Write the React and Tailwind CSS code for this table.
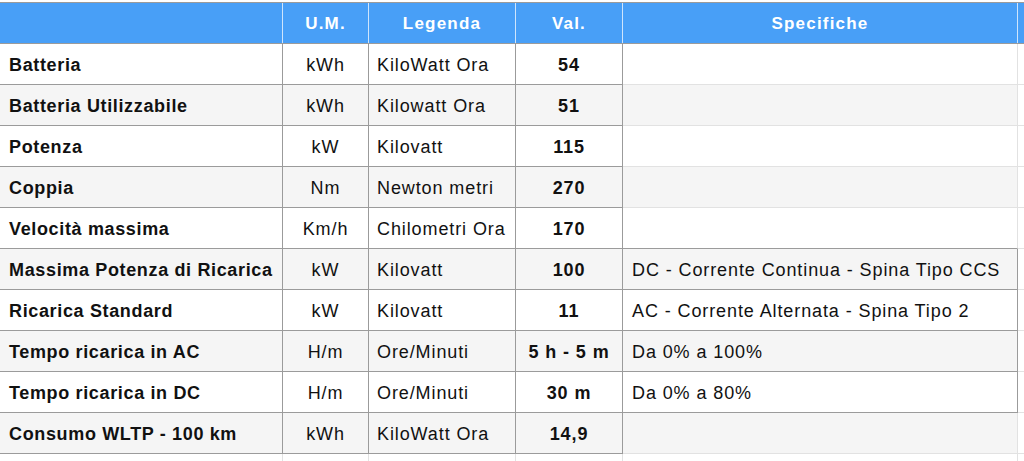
import React from "react";

const rows = [
    { name: "Batteria", um: "kWh", leg: "KiloWatt Ora", val: "54", spec: "" },
    { name: "Batteria Utilizzabile", um: "kWh", leg: "Kilowatt Ora", val: "51", spec: "" },
    { name: "Potenza", um: "kW", leg: "Kilovatt", val: "115", spec: "" },
    { name: "Coppia", um: "Nm", leg: "Newton metri", val: "270", spec: "" },
    { name: "Velocità massima", um: "Km/h", leg: "Chilometri Ora", val: "170", spec: "" },
    { name: "Massima Potenza di Ricarica", um: "kW", leg: "Kilovatt", val: "100", spec: "DC - Corrente Continua - Spina Tipo CCS" },
    { name: "Ricarica Standard", um: "kW", leg: "Kilovatt", val: "11", spec: "AC - Corrente Alternata - Spina Tipo 2" },
    { name: "Tempo ricarica in AC", um: "H/m", leg: "Ore/Minuti", val: "5 h - 5 m", spec: "Da 0% a 100%" },
    { name: "Tempo ricarica in DC", um: "H/m", leg: "Ore/Minuti", val: "30 m", spec: "Da 0% a 80%" },
    { name: "Consumo WLTP - 100 km", um: "kWh", leg: "KiloWatt Ora", val: "14,9", spec: "" },
];

const font = { fontFamily: "'Liberation Sans', Arial, sans-serif" };

const SpecCell = ({ row, next, children }) => {
    const boxed = row.spec !== "";
    const bottomDark = boxed || (next && next.spec !== "");
    return (
        <div
            className={
                "w-[395px] h-full flex items-center pl-[9px] pt-[3px] border-r border-b " +
                (boxed ? "border-r-[#9b9b9b] " : "border-r-[#e2e2e2] ") +
                (bottomDark ? "border-b-[#9b9b9b]" : "border-b-[#e2e2e2]")
            }
        >
            {children}
        </div>
    );
};

export default function App() {
    return (
        <div className="w-[1024px] h-[461px] overflow-hidden bg-white pt-[2px] text-[18px] tracking-[0.9px] text-[#111]" style={font}>
            <div className="flex h-[42px] bg-[#489ff7] border-t border-b border-[#9b9b9b] text-white font-bold text-[17px] tracking-[1.2px]">
                <div className="w-[283px] border-r border-r-[#cfe5fc]"></div>
                <div className="w-[86px] border-r border-r-[#cfe5fc] flex items-center justify-center pt-[2px]">U.M.</div>
                <div className="w-[147px] border-r border-r-[#cfe5fc] flex items-center justify-center pt-[2px]">Legenda</div>
                <div className="w-[107px] border-r border-r-[#cfe5fc] flex items-center justify-center pt-[2px]">Val.</div>
                <div className="w-[395px] border-r border-r-[#cfe5fc] flex items-center justify-center pt-[2px]">Specifiche</div>
                <div className="flex-1"></div>
            </div>
            {rows.map((row, i) => (
                <div key={i} className={"flex h-[41px] " + (i % 2 === 1 ? "bg-[#f5f5f5]" : "bg-white")}>
                    <div className="w-[283px] h-full flex items-center pl-[9px] pt-[3px] font-bold tracking-[0.65px] border-r border-b border-[#9b9b9b]">
                        {row.name}
                    </div>
                    <div className="w-[86px] h-full flex items-center justify-center pt-[3px] border-r border-b border-[#9b9b9b]">
                        {row.um}
                    </div>
                    <div className="w-[147px] h-full flex items-center pl-2 pt-[3px] border-r border-b border-[#9b9b9b]">
                        {row.leg}
                    </div>
                    <div className="w-[107px] h-full flex items-center justify-center pt-[3px] font-bold tracking-[0.9px] border-r border-b border-[#9b9b9b]">
                        {row.val}
                    </div>
                    <SpecCell row={row} next={rows[i + 1]}>
                        {row.spec}
                    </SpecCell>
                    <div className="flex-1 h-full bg-white border-b border-[#e2e2e2]"></div>
                </div>
            ))}
            <div className="flex h-[41px] bg-white">
                <div className="w-[283px] h-full border-r border-[#e2e2e2]"></div>
                <div className="w-[86px] h-full border-r border-[#e2e2e2]"></div>
                <div className="w-[147px] h-full border-r border-[#e2e2e2]"></div>
                <div className="w-[107px] h-full border-r border-[#e2e2e2]"></div>
                <div className="w-[395px] h-full border-r border-[#e2e2e2]"></div>
                <div className="flex-1"></div>
            </div>
        </div>
    );
}
